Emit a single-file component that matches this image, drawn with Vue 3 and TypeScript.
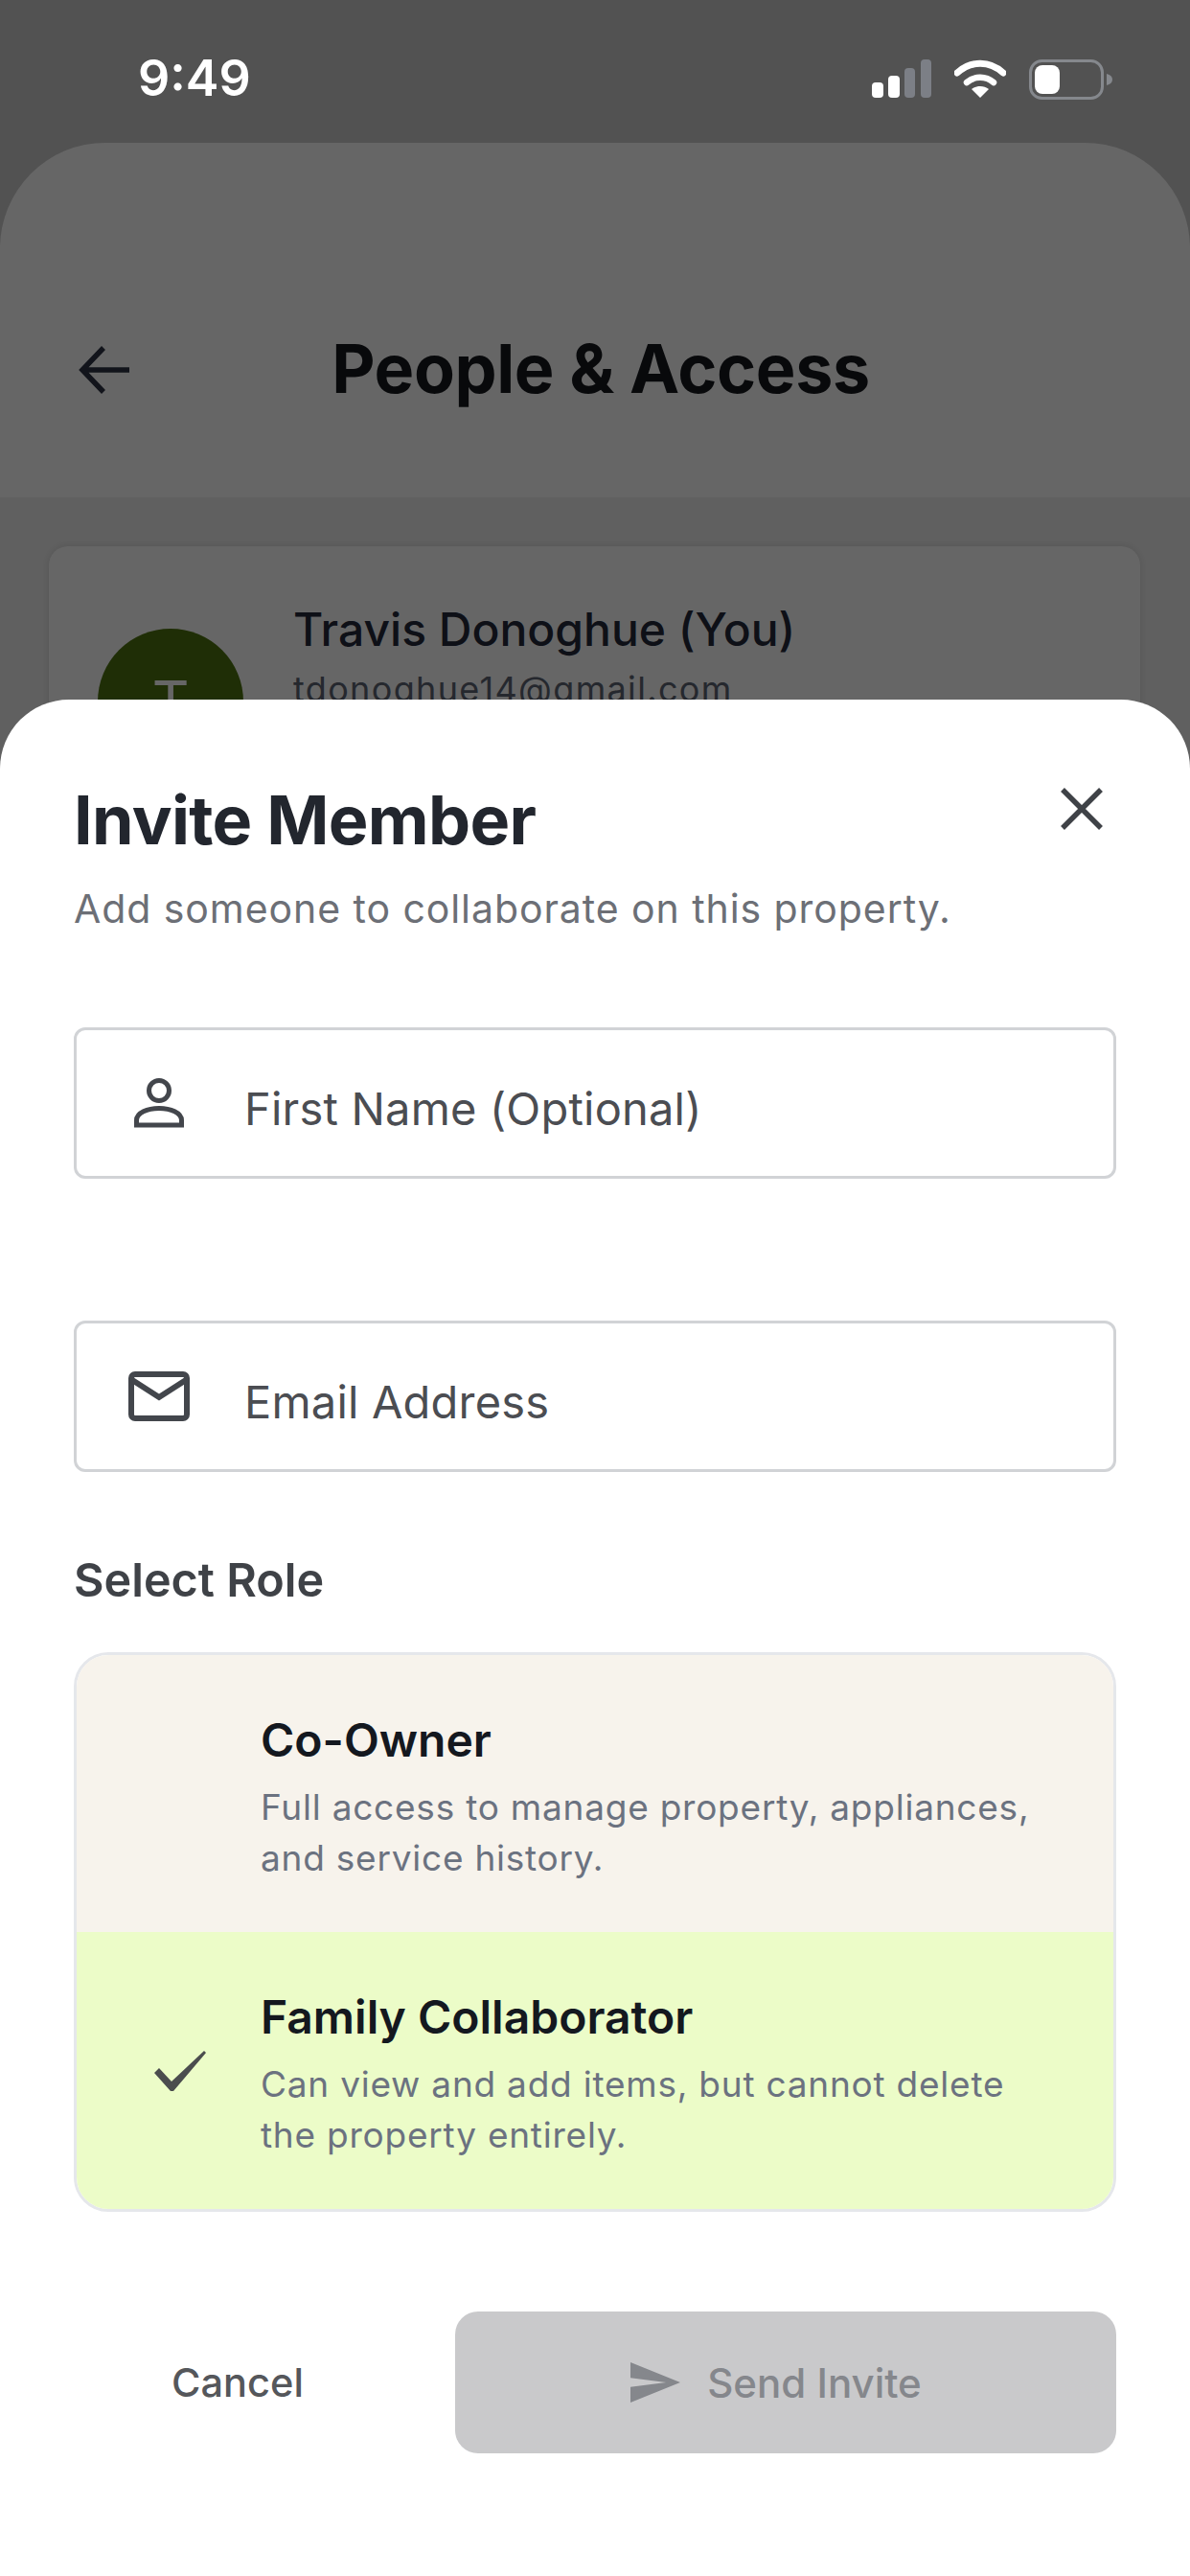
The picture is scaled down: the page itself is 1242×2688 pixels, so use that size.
<template>
  <div class="page">
    <div class="status-bar">
      <span class="time">9:49</span>
      <div class="status-icons">
        <svg class="signal" width="62" height="40" viewBox="0 0 62 40">
          <rect x="0" y="24" width="12" height="16" rx="4" fill="#fff" />
          <rect x="17" y="17" width="12" height="23" rx="4" fill="#fff" />
          <rect x="34" y="9" width="11" height="31" rx="4" fill="#7c7f86" />
          <rect x="51" y="0" width="11" height="40" rx="4" fill="#7c7f86" />
        </svg>
        <svg class="wifi" width="54" height="40" viewBox="0 0 54 40">
          <path d="M3 14C17 1 37 1 51 14" fill="none" stroke="#fff" stroke-width="7" stroke-linecap="round" />
          <path d="M13 24C21 17 33 17 41 24" fill="none" stroke="#fff" stroke-width="6.5" stroke-linecap="round" />
          <path d="M18 31C23 27 31 27 36 31L27 40Z" fill="#fff" />
        </svg>
        <svg class="battery" width="88" height="42" viewBox="0 0 88 42">
          <rect x="1.5" y="1.5" width="75" height="39" rx="12" fill="none" stroke="#85888d" stroke-width="3" />
          <rect x="6" y="6" width="26" height="30" rx="8" fill="#fff" />
          <path d="M81 15C85 16 87 18 87 21C87 24 85 26 81 27Z" fill="#85888d" />
        </svg>
      </div>
    </div>

    <div class="screen">
      <header class="screen-header">
        <svg class="back" width="54" height="50" viewBox="0 0 54 50">
          <path d="M53 25H5M26 2L4 25L26 48" fill="none" stroke="#2d3444" stroke-width="5.500" />
        </svg>
        <h1>People &amp; Access</h1>
      </header>
      <div class="screen-body">
        <div class="member-card">
          <div class="avatar">T</div>
          <div class="member-info">
            <div class="member-name">Travis Donoghue (You)</div>
            <div class="member-email">tdonoghue14@gmail.com</div>
          </div>
        </div>
      </div>
    </div>

    <div class="scrim"></div>

    <section class="sheet">
      <div class="sheet-head">
        <h2>Invite Member</h2>
        <button class="close" aria-label="Close">
          <svg width="46" height="46" viewBox="0 0 46 46">
            <path d="M3 3L43 43M43 3L3 43" fill="none" stroke="#3f4247" stroke-width="5.500" />
          </svg>
        </button>
      </div>
      <p class="subtitle">Add someone to collaborate on this property.</p>

      <div class="field first-field">
        <span class="field-icon">
          <svg width="52" height="52" viewBox="0 0 52 52">
            <circle cx="26" cy="13" r="10.500" fill="none" stroke="#43464c" stroke-width="5" />
            <path d="M2.500 49V44C2.500 36 14 31.500 26 31.500S49.500 36 49.500 44V49Z" fill="none" stroke="#43464c" stroke-width="5" />
          </svg>
        </span>
        <span class="placeholder">First Name (Optional)</span>
      </div>
      <div class="field">
        <span class="field-icon">
          <svg width="64" height="52" viewBox="0 0 64 52">
            <rect x="3" y="3" width="58" height="46" rx="4" fill="none" stroke="#43464c" stroke-width="6" />
            <path d="M4 9L32 27L60 9" fill="none" stroke="#43464c" stroke-width="6" />
          </svg>
        </span>
        <span class="placeholder">Email Address</span>
      </div>

      <div class="role-label">Select Role</div>
      <div class="role-group">
        <div
          v-for="role in roles"
          :key="role.name"
          class="role-row"
          :class="{ selected: role.name === selectedRole }"
        >
          <div class="role-check">
            <svg v-if="role.name === selectedRole" width="56" height="44" viewBox="0 0 56 44">
              <path d="M1 24L6 19L19 33L53 1L55 3L21 43H18Z" fill="#4b4d4e" />
            </svg>
          </div>
          <div class="role-text">
            <div class="role-name">{{ role.name }}</div>
            <div class="role-desc">{{ role.line1 }}<br />{{ role.line2 }}</div>
          </div>
        </div>
      </div>

      <div class="actions">
        <button class="cancel">Cancel</button>
        <button class="send" disabled>
          <svg width="52" height="42" viewBox="2 3 21 18" preserveAspectRatio="none">
            <path d="M2.010 21L23 12 2.010 3 2 10l15 2-15 2z" fill="#85878c" />
          </svg>
          <span>Send Invite</span>
        </button>
      </div>
    </section>
  </div>
</template>

<script setup lang="ts">
interface Role {
  name: string
  line1: string
  line2: string
}

const selectedRole = 'Family Collaborator'

const roles: Role[] = [
  {
    name: 'Co-Owner',
    line1: 'Full access to manage property, appliances,',
    line2: 'and service history.',
  },
  {
    name: 'Family Collaborator',
    line1: 'Can view and add items, but cannot delete',
    line2: 'the property entirely.',
  },
]
</script>

<style>
html,
body {
  margin: 0;
  background: #fff;
}
</style>

<style scoped>
.page {
  position: relative;
  width: 1242px;
  height: 2688px;
  overflow: hidden;
  background: #cdcdcd;
  font-family: Inter, 'Noto Sans', sans-serif;
}

.status-bar {
  position: absolute;
  top: 0;
  left: 0;
  right: 0;
  z-index: 3;
  height: 147px;
  display: flex;
  justify-content: space-between;
  padding: 54px 80px 0 144px;
  box-sizing: border-box;
}

.time {
  color: #fff;
  font-size: 52px;
  font-weight: 600;
  line-height: 56px;
}

.status-icons {
  display: flex;
  align-items: flex-start;
  gap: 24px;
  padding-top: 8px;
}

.screen {
  padding-top: 149px;
}

.screen-header {
  position: relative;
  height: 370px;
  box-sizing: border-box;
  padding: 100px 0 0 12px;
  background: #fff;
  border-radius: 110px 110px 0 0;
  display: flex;
  align-items: center;
  justify-content: center;
}

.back {
  position: absolute;
  left: 82px;
  top: 212px;
}

.screen-header h1 {
  margin: 0;
  color: #16181d;
  font-size: 70px;
  font-weight: 700;
  letter-spacing: -0.4px;
}

.screen-body {
  height: 1000px;
  padding: 51px 52px 0 51px;
  background: #f0f0f0;
}

.member-card {
  display: flex;
  gap: 52px;
  height: 900px;
  padding: 0 0 0 51px;
  background: #fff;
  border-radius: 20px;
  box-shadow: 0 0 8px rgba(0, 0, 0, 0.12);
}

.avatar {
  width: 152px;
  height: 152px;
  margin-top: 86px;
  border-radius: 50%;
  background: #4e7310;
  color: #fff;
  display: flex;
  align-items: center;
  justify-content: center;
  font-size: 60px;
  font-weight: 400;
}

.member-info {
  padding-top: 57px;
}

.member-name {
  color: #23283a;
  font-size: 48px;
  font-weight: 500;
  line-height: 60px;
}

.member-email {
  margin-top: 8px;
  color: #5c6473;
  font-size: 36px;
  letter-spacing: 1.35px;
  line-height: 48px;
}

.scrim {
  position: absolute;
  inset: 0;
  z-index: 1;
  background: rgba(0, 0, 0, 0.6);
}

.sheet {
  position: absolute;
  top: 730px;
  left: 0;
  right: 0;
  bottom: 0;
  z-index: 2;
  padding: 76px 77px 0;
  background: #fff;
  border-radius: 72px 72px 0 0;
}

.sheet-head {
  display: flex;
  justify-content: space-between;
  align-items: flex-start;
}

.sheet-head h2 {
  margin: 0;
  color: #22262e;
  font-size: 70px;
  font-weight: 700;
  line-height: 100px;
  letter-spacing: -0.7px;
}

.close {
  margin: 15px 13px 0 0;
  padding: 0;
  background: none;
  border: none;
  display: flex;
}

.subtitle {
  margin: 14px 0 0;
  color: #6c6f76;
  font-size: 41px;
  line-height: 56px;
  letter-spacing: 0.93px;
}

.field {
  display: flex;
  align-items: center;
  height: 158px;
  box-sizing: border-box;
  border: 3px solid #d1d3d6;
  border-radius: 12px;
  margin-bottom: 148px;
}

.first-field {
  margin-top: 96px;
}

.field-icon {
  width: 175px;
  flex: none;
  display: flex;
  justify-content: center;
  padding-right: 3px;
  box-sizing: border-box;
}

.placeholder {
  padding-top: 10px;
  color: #4b4d52;
  font-size: 47px;
  letter-spacing: 0.2px;
}

.role-label {
  margin-top: -65px;
  color: #3f4247;
  font-size: 48.500px;
  font-weight: 600;
  line-height: 60px;
}

.role-group {
  margin-top: 45px;
  border: 3px solid #e5e7eb;
  border-radius: 36px;
  overflow: hidden;
}

.role-row {
  display: flex;
  align-items: center;
  height: 289px;
  background: #f7f3ec;
}

.role-row.selected {
  background: #ecfcc8;
}

.role-check {
  width: 192px;
  flex: none;
  display: flex;
  justify-content: center;
  padding-left: 24px;
  box-sizing: border-box;
}

.role-text {
  padding-top: 7px;
}

.role-name {
  color: #14181f;
  font-size: 48px;
  font-weight: 600;
  line-height: 60px;
}

.role-desc {
  margin-top: 13px;
  color: #6b7280;
  font-size: 37px;
  line-height: 53px;
  letter-spacing: 0.77px;
}

.actions {
  display: flex;
  align-items: center;
  justify-content: space-between;
  margin-top: 104px;
}

.cancel {
  width: 342px;
  padding: 0;
  background: none;
  border: none;
  color: #55575b;
  font-family: inherit;
  font-size: 41.500px;
  font-weight: 500;
}

.send {
  width: 690px;
  height: 148px;
  display: flex;
  align-items: center;
  justify-content: center;
  gap: 28px;
  padding: 0 20px 0 0;
  border: none;
  border-radius: 24px;
  background: #c9c9cb;
  color: #85878c;
  font-family: inherit;
  font-size: 42px;
  font-weight: 500;
}
</style>
